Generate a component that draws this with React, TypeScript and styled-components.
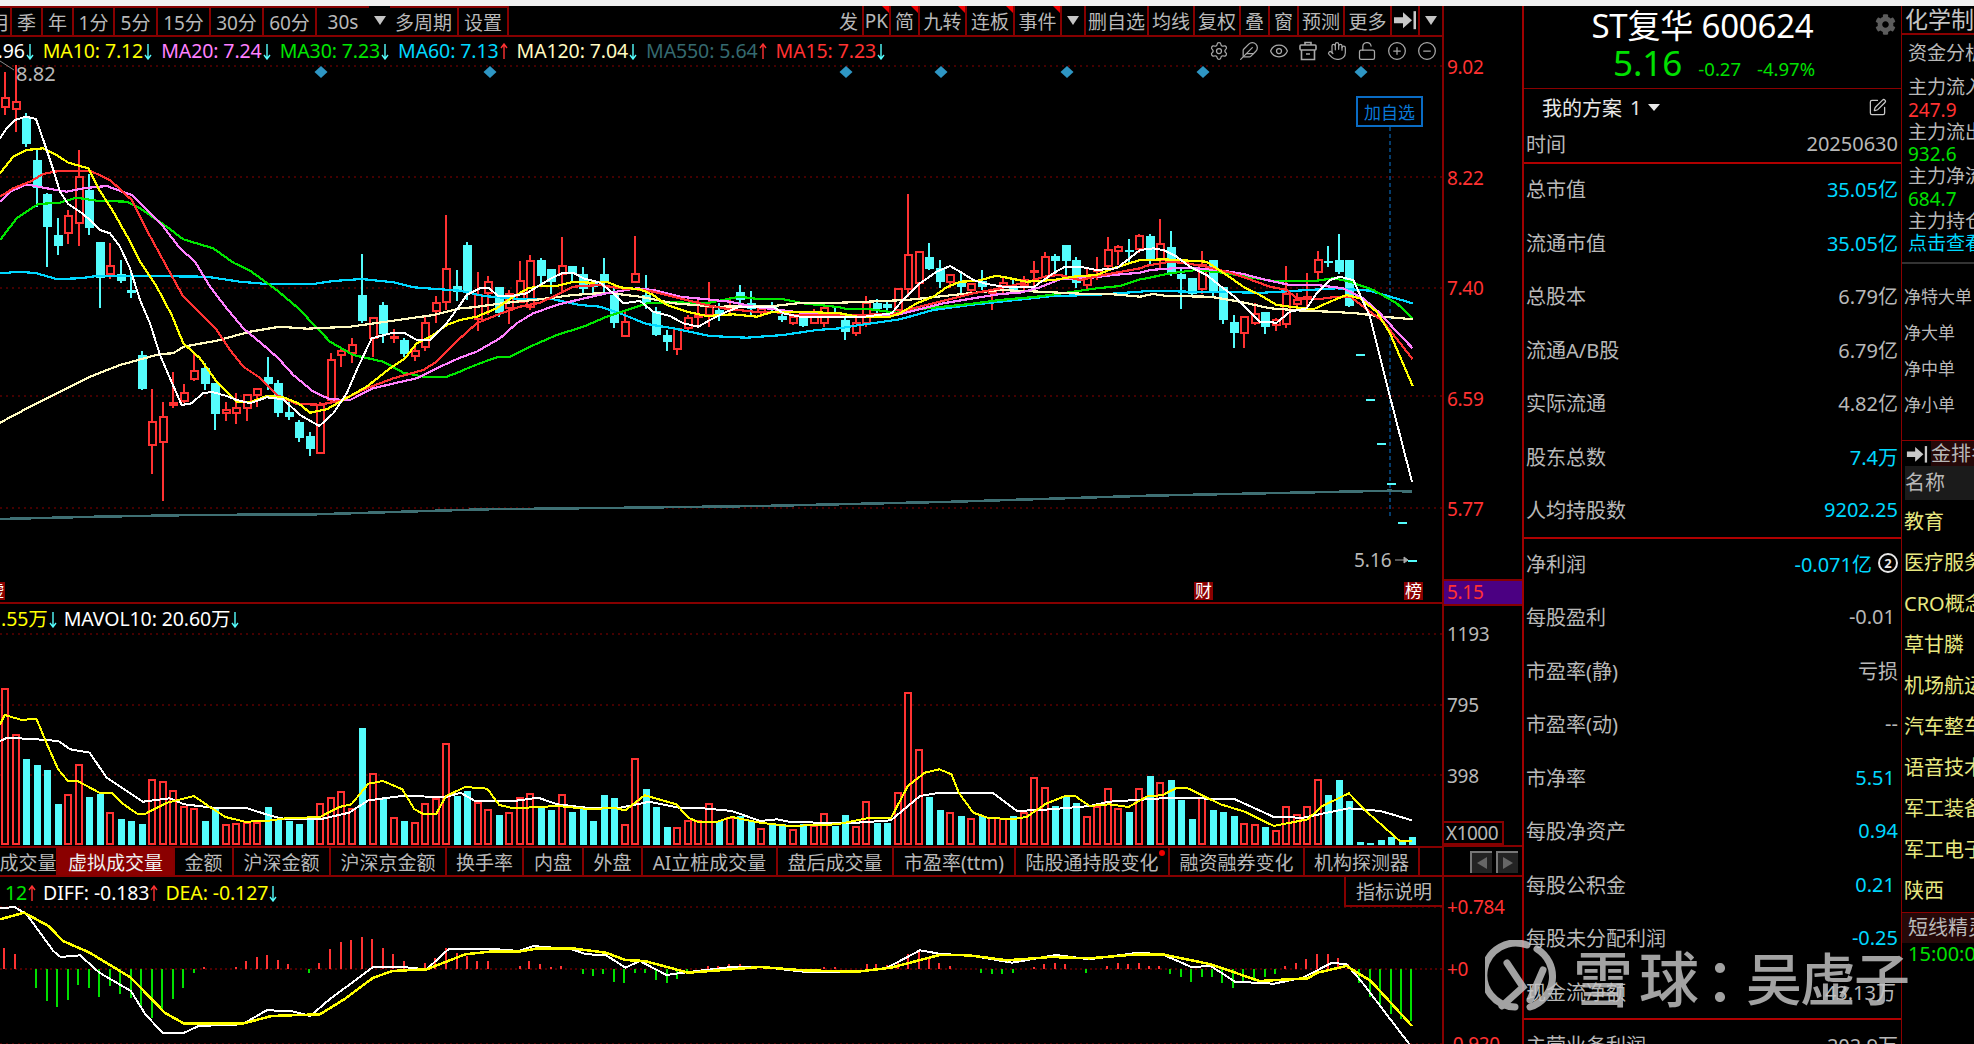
import React from 'react';
import styled, { createGlobalStyle } from 'styled-components';
import { Settings, Feather, Eye, Hand, LockOpen, CirclePlus, CircleMinus, SquarePen } from 'lucide-react';
import { FaCog } from 'react-icons/fa';

const RED = '#ff3232';
const CYAN = '#54fcfc';
const LINE = '#860000';
const GREY = '#b8b8b8';
const SKY = '#00d8ff';
const GREEN = '#00e000';

const Global = createGlobalStyle`
  html, body { margin: 0; padding: 0; background: #000; }
  body { font-family: "Noto Sans", "Noto Sans CJK SC", sans-serif; }
`;

const Page = styled.div`
  position: relative; width: 1974px; height: 1044px; overflow: hidden; background: #000;
  color: ${GREY}; white-space: nowrap; display: flex; flex-direction: column;
`;
const TopStrip = styled.div`height: 6px; background: #f0f0f0; flex: none;`;
const Body = styled.div`display: flex; flex: 1; min-height: 0;`;
const ChartCol = styled.div`width: 1442px; flex: none; display: flex; flex-direction: column;`;

const Toolbar = styled.div`
  height: 29px; flex: none; display: flex; justify-content: space-between; border-bottom: 2px solid ${LINE};
`;
const ToolGroup = styled.div`display: flex; height: 100%;`;
const ToolBtn = styled.div<{ $w: number; $top?: boolean; $none?: boolean; $corner?: boolean }>`
  position: relative; width: ${p => p.$w}px; box-sizing: border-box; flex: none; height: 100%;
  display: flex; align-items: center; justify-content: center; overflow: hidden;
  font-size: 19px; color: ${GREY};
  border-right: ${p => (p.$none ? 'none' : `2px solid ${LINE}`)};
  border-top: ${p => (p.$top ? `2px solid ${LINE}` : 'none')};
  ${p => p.$corner ? `&::after { content: ''; position: absolute; top: 0; right: 0; border-top: 7px solid #f00000; border-left: 7px solid transparent; }` : ''}
`;
const Clipped = styled.div`width: 12px; overflow: hidden; display: flex; justify-content: flex-end; flex: none; box-sizing: border-box; height: 100%; align-items: center; font-size: 19px; border-right: 2px solid ${LINE}; border-top: 2px solid ${LINE};`;
const Tri = styled.div`width: 0; height: 0; border-left: 6px solid transparent; border-right: 6px solid transparent; border-top: 9px solid #c4c4c4;`;

const Pane = styled.div<{ $h: number; $line?: boolean }>`
  position: relative; height: ${p => p.$h}px; flex: none; overflow: hidden;
  border-bottom: ${p => (p.$line ? `2px solid ${LINE}` : 'none')};
`;
const Chart = styled.svg`display: block;`;
const Legend = styled.div<{ $left: number; $top: number; $gap: number }>`
  position: absolute; left: ${p => p.$left}px; top: ${p => p.$top}px; display: flex; gap: ${p => p.$gap}px;
  font-size: 19.5px; line-height: 22px;
`;
const LegendItem = styled.span<{ $c: string }>`color: ${p => p.$c}; display: inline-flex; align-items: center; gap: 1px; letter-spacing: -.1px;`;
const ToolIcons = styled.div`
  position: absolute; right: 5px; top: 4px; display: flex; gap: 10px; align-items: center; color: #a8a8a8;
`;
const AddBtn = styled.div`
  position: absolute; left: 1356px; top: 59px; width: 67px; height: 31px; box-sizing: border-box;
  border: 2px solid #0a6cc4; color: #0a78d8; font-size: 17px; display: flex; align-items: center; justify-content: center;
`;

const Tabs = styled.div`
  height: 31px; flex: none; box-sizing: border-box; display: flex; border-top: 2px solid ${LINE}; border-bottom: 2px solid ${LINE};
`;
const Tab = styled.div<{ $w: number; $on?: boolean; $dot?: boolean }>`
  position: relative; width: ${p => p.$w}px; flex: none; box-sizing: border-box; display: flex; align-items: center; justify-content: center;
  overflow: hidden; font-size: 19px; border-right: 2px solid ${LINE};
  background: ${p => (p.$on ? '#8a0000' : 'transparent')}; color: ${p => (p.$on ? '#f0f0f0' : GREY)};
  ${p => p.$dot ? `&::after { content: ''; position: absolute; top: 2px; right: 3px; width: 6px; height: 6px; border-radius: 50%; background: #f00000; }` : ''}
`;
const HintBtn = styled.div`
  position: absolute; right: 0; top: 0; width: 98px; height: 30px; box-sizing: border-box;
  border-left: 2px solid ${LINE}; border-bottom: 2px solid ${LINE}; font-size: 19px; display: flex; align-items: center; justify-content: center; background: #000;
`;

const AxisCol = styled.div`
  width: 80px; flex: none; box-sizing: border-box; border-left: 2px solid ${LINE}; display: flex; flex-direction: column;
`;
const AxisBlock = styled.div<{ $h: number; $pt: number; $gap: number }>`
  height: ${p => p.$h}px; flex: none; box-sizing: border-box; padding-top: ${p => p.$pt}px; padding-left: 3px;
  display: flex; flex-direction: column; gap: ${p => p.$gap}px;
`;
const AxisLabel = styled.div<{ $c: string; $mt?: number }>`height: 20px; flex: none; line-height: 20px; font-size: 19px; letter-spacing: -.3px; color: ${p => p.$c}; margin-top: ${p => p.$mt || 0}px;`;
const Violet = styled.div`
  height: 27px; flex: none; box-sizing: border-box; background: #4b0082; border-top: 2px solid ${LINE}; border-bottom: 2px solid ${LINE};
  color: ${RED}; font-size: 19px; line-height: 23px; padding-left: 3px; letter-spacing: -.3px;
`;
const XBox = styled.div`
  width: 60px; height: 24px; box-sizing: border-box; flex: none; border: 2px solid ${LINE}; border-left: none; font-size: 19px; line-height: 21px; padding-left: 2px; letter-spacing: -.5px;
`;
const ScrollRow = styled.div`
  height: 32px; flex: none; box-sizing: border-box; display: flex; gap: 4px; padding: 4px 0 2px 28px; margin-left: -2px; width: 80px;
  border-top: 2px solid ${LINE}; border-bottom: 2px solid ${LINE};
`;
const ScrollBtn = styled.div<{ $left?: boolean }>`
  width: 22px; flex: none; background: #232323; border-top: 2px solid #777; border-left: 2px solid #777; box-sizing: border-box;
  display: flex; align-items: center; justify-content: center;
  &::before { content: ''; border-top: 6px solid transparent; border-bottom: 6px solid transparent;
    ${p => (p.$left ? 'border-right: 10px solid #666;' : 'border-left: 10px solid #666;')} }
`;

const Info = styled.div`
  width: 380px; flex: none; box-sizing: border-box; border-left: 2px solid #a00000; border-right: 1px solid #8a0000; display: flex; flex-direction: column;
`;
const Head = styled.div`height: 83px; flex: none; box-sizing: border-box; position: relative; border-bottom: 1px solid #8a0000; display: flex; flex-direction: column; align-items: center;`;
const Title = styled.div`font-size: 33px; line-height: 34px; color: #fff; margin-top: 3px; margin-right: 20px; letter-spacing: -.2px;`;
const PriceRow = styled.div`display: flex; align-items: baseline; gap: 15px; margin-top: -1px; margin-left: 3px; color: ${GREEN};`;
const Price = styled.span`font-size: 35px; line-height: 42px;`;
const Chg = styled.span`font-size: 18.5px; margin-left: 1px;`;
const GearWrap = styled.div`position: absolute; right: 5px; top: 8px; color: #5c5c5c; display: flex;`;
const Plan = styled.div`
  height: 36px; flex: none; display: flex; align-items: center; padding: 0 14px 0 18px; justify-content: space-between; font-size: 20px;
`;
const PlanName = styled.div`display: flex; align-items: center; gap: 8px; color: #e8e8e8;`;
const PlanTri = styled.span`width: 0; height: 0; border-left: 6px solid transparent; border-right: 6px solid transparent; border-top: 7px solid #e8e8e8; margin-left: -1px;`;
const TimeRow = styled.div`
  height: 37px; flex: none; display: flex; align-items: center; justify-content: space-between; padding: 0 3px 0 2px; font-size: 20px;
`;
const Section = styled.div`border-top: 2px solid #b00000; flex: none;`;
const Rows = styled.div`margin-top: -2px;`;
const InfoRow = styled.div`
  height: 53.5px; display: flex; align-items: center; justify-content: space-between; padding: 0 3px 0 2px; font-size: 20px; color: ${GREY};
`;
const Val = styled.span<{ $c?: string; $pr?: number }>`color: ${p => p.$c || GREY}; padding-right: ${p => p.$pr || 0}px; display: inline-flex; align-items: center; gap: 6px;`;
const Ring = styled.span`
  width: 20px; height: 20px; box-sizing: border-box; border: 2px solid #e8e8e8; border-radius: 50%; color: #e8e8e8;
  font-size: 13px; font-weight: 700; line-height: 16px; text-align: center; display: inline-block;
`;

const Far = styled.div`width: 72px; flex: none; display: flex; flex-direction: column; overflow: hidden;`;
const FarHead = styled.div`height: 27px; flex: none; border-bottom: 2px solid #8a0000; font-size: 23px; line-height: 27px; padding-left: 3px; color: #c4c4c4;`;
const Fund = styled.div`height: 229px; flex: none; box-sizing: border-box; padding: 7px 0 0 6px; border-bottom: 2px solid #333; font-size: 19px;`;
const FundLine = styled.div<{ $c?: string; $mb?: number }>`height: 22.3px; line-height: 22.3px; color: ${p => p.$c || GREY}; margin-bottom: ${p => p.$mb || 0}px;`;
const Net = styled.div`height: 177px; flex: none; box-sizing: border-box; padding-top: 15px; border-bottom: 1px solid #8a0000; font-size: 17px;`;
const NetLine = styled.div`height: 36px; line-height: 36px; padding-left: 2px;`;
const RankHead = styled.div`height: 26px; flex: none; display: flex; align-items: center; gap: 3px; padding-left: 4px; font-size: 20px; & > svg { flex: none; }`;
const RankTitle = styled.span`background: #250808; flex: 1; line-height: 26px; height: 26px;`;
const NameHead = styled.div`height: 34px; flex: none; background: #1b1b1b; margin: -1px 0 0 3px; line-height: 34px; font-size: 20px;`;
const RankList = styled.div`flex: none; padding: 1px 0 0 2px;`;
const RankItem = styled.div`height: 41px; line-height: 41px; font-size: 20px; color: #e8e880;`;
const Sprite = styled.div`height: 30px; flex: none; background: #250808; border-top: 1px solid #8a0000; font-size: 20px; line-height: 30px; padding-left: 6px; margin-top: 1px;`;
const SpriteTime = styled.div`color: ${GREEN}; font-size: 20px; line-height: 22px; padding: 0 0 0 6px;`;

const Watermark = styled.div`
  position: absolute; left: 1485px; top: 940px; height: 72px; display: flex; align-items: center; color: #c6c6c6; opacity: .82;
  font-family: "Noto Sans CJK SC", sans-serif; font-size: 60px; font-weight: 500; line-height: 72px;
`;
const WmText = styled.span<{ $ml: number; $ls?: number; $size?: number }>`margin-left: ${p => p.$ml}px; letter-spacing: ${p => p.$ls || 0}px; font-size: ${p => p.$size || 60}px;`;

// ---------- chart data, in crop coordinates ----------
type Seg = [number, number, number, number, number[]];
const Z5 = (p: number[]): Seg => [0, 560, 2.063, 3, p];
const Z6 = (p: number[]): Seg => [760, 560, 2.063, 3, p];
const Z7 = (p: number[]): Seg => [0, 280, 2.063, 3, p];
const Z8 = (p: number[]): Seg => [760, 280, 2.063, 3, p];
const Z9 = (p: number[]): Seg => [0, 60, 3, 3, p];
const Z10 = (p: number[]): Seg => [440, 200, 3, 3, p];
const Z11 = (p: number[]): Seg => [820, 200, 3, 3, p];
const Z12 = (p: number[]): Seg => [1130, 200, 3, 3, p];

const build = (segs: Seg[]): string => {
  const out: string[] = [];
  let last = -1;
  segs.forEach(([ox, oy, sx, sy, p]) => {
    for (let i = 0; i < p.length; i += 2) {
      const x = ox + p[i] / sx;
      const y = oy + p[i + 1] / sy;
      if (x > last) { out.push(`${x.toFixed(1)},${y.toFixed(1)}`); last = x; }
    }
  });
  return out.join(' ');
};

const PRICE_LINES: { c: string; w: number; segs: Seg[] }[] = [
  { c: '#3f7074', w: 2.5, segs: [Z7([0,717,200,710,400,705,650,703,1000,688,1300,683,1568,678]), Z8([0,678,400,665,800,647,1300,632,1345,635])] },
  { c: '#00d8ff', w: 2.2, segs: [
    Z9([0,640,60,635,110,640,170,657,240,655,290,648,420,648,620,650,720,665,800,672,940,672,1000,663,1085,657,1180,667,1240,682,1380,692]),
    Z10([0,268,50,272,130,288,240,297,340,298,420,315,480,320,540,340,620,372,700,385,810,408,920,413,1030,405,1130,390,1200,385]),
    Z11([0,388,100,378,240,358,340,330,450,315,560,303,700,288,820,285,960,275]),
    Z12([0,275,60,272,180,275,400,278,500,272,620,265,720,272,780,290,848,310])] },
  { c: '#00e600', w: 2.2, segs: [
    Z9([0,540,50,475,115,432,180,428,230,413,290,422,380,425,420,445,500,500,550,538,640,565,700,608,750,632,830,690,895,745,990,845,1060,885,1150,905,1210,938,1270,950,1340,950,1380,935]),
    Z10([70,510,120,490,170,472,210,470,270,440,350,405,430,380,500,350,560,330,620,310,700,307,800,310,900,290,960,298,1030,298,1090,310,1200,322]),
    Z11([0,312,40,318,80,327,150,328,230,338,290,328,370,320,450,312,540,300,650,290,760,275,830,265,900,258,960,238]),
    Z12([0,243,50,235,120,220,200,210,280,218,380,235,430,243,560,242,610,235,660,245,730,270,800,310,848,355])] },
  { c: '#fffac0', w: 2.2, segs: [
    Z9([0,1088,100,1035,200,985,270,950,360,915,480,882,520,880,550,860,650,842,750,815,840,800,920,806,1050,800,1180,782,1300,765,1380,745]),
    Z10([0,338,100,322,200,308,300,298,400,285,500,278,600,290,700,310,830,320,1000,318,1090,308,1200,308]),
    Z11([0,308,140,305,260,300,400,285,540,270,660,275,800,282,880,283,960,290]),
    Z12([0,287,70,282,110,288,240,290,330,305,420,325,520,332,600,335,680,340,760,350,848,358])] },
  { c: '#ff80ff', w: 2.2, segs: [
    Z9([0,425,30,395,80,373,140,385,200,395,250,385,320,378,395,405,440,450,490,500,540,565,585,605,630,680,680,745,730,805,790,855,835,895,880,945,940,995,990,1018,1050,1020,1120,985,1190,968,1250,955,1310,925,1380,893]),
    Z10([0,505,50,475,110,455,180,415,230,370,280,340,350,315,420,298,500,280,590,265,640,270,720,290,800,298,870,305,940,320,1020,330,1100,340,1200,345]),
    Z11([0,340,50,345,130,350,230,345,290,330,370,310,460,295,540,282,600,278,660,262,720,238,800,235,880,225,960,218]),
    Z12([0,218,60,210,130,205,200,205,280,212,340,222,400,238,480,255,560,255,640,265,700,295,750,340,800,395,848,445])] },
  { c: '#ff3232', w: 2.2, segs: [
    Z9([0,410,40,385,90,365,130,342,180,332,270,332,330,360,395,420,440,510,500,620,550,710,600,760,650,810,690,870,730,920,775,950,830,1005,890,1032,960,1034,1020,1022,1100,985,1180,955,1270,930,1310,905,1380,835]),
    Z10([0,470,60,410,110,370,170,345,240,320,300,308,350,285,400,260,480,255,540,265,590,268,640,275,700,290,800,315,850,325,940,335,1000,335,1060,345,1200,345]),
    Z11([0,345,50,342,130,345,230,340,280,325,340,310,400,295,460,280,540,265,620,247,680,228,720,225,780,240,850,225,960,205]),
    Z12([0,210,50,197,120,185,170,190,230,200,290,215,350,235,420,260,470,270,500,295,570,297,620,290,660,290,700,320,760,365,848,478])] },
  { c: '#ffff00', w: 2.2, segs: [
    Z9([0,340,40,290,80,270,130,265,170,285,205,308,265,325,295,385,340,455,385,535,420,605,470,680,515,765,550,850,600,895,650,965,710,1025,750,1027,800,1008,850,1012,895,1030,930,1058,980,1048,1020,1025,1100,980,1170,925,1215,895,1250,850,1300,825,1340,795,1380,780]),
    Z10([0,395,40,365,110,350,170,325,220,290,265,265,300,258,350,258,400,245,450,248,500,245,540,262,600,268,640,285,680,315,740,335,800,348,880,343,950,350,1000,335,1080,335,1200,340]),
    Z11([0,340,60,355,120,352,210,350,240,340,290,310,340,290,380,262,420,245,470,243,530,227,570,235,620,245,700,240,760,230,830,225,880,205,960,180]),
    Z12([0,187,50,180,100,178,180,182,230,185,290,225,340,260,390,285,440,315,480,320,550,328,600,305,650,285,690,295,740,335,780,400,848,558])] },
  { c: '#ffffff', w: 2, segs: [
    Z9([0,235,20,205,45,180,78,170,108,177,130,240,160,330,180,395,205,432,240,455,270,480,300,510,330,520,360,560,390,625,420,720,450,790,480,885,510,955,545,1035,575,1030,610,998,640,997,680,1008,710,1020,750,1030,800,1012,850,1018,900,1065,958,1098,1000,1060,1040,1000,1070,930,1115,835,1180,818,1215,820,1250,840,1290,840,1340,790,1380,735]),
    Z10([30,340,80,285,120,265,145,263,175,288,215,288,260,280,300,255,340,232,370,218,400,218,430,235,480,248,520,280,550,310,600,303,640,335,690,348,730,370,775,380,810,360,860,335,900,320,960,320,1000,320,1030,340,1080,350,1120,352,1200,352]),
    Z11([0,352,60,355,120,352,215,340,240,310,300,250,350,215,390,198,420,215,460,240,500,252,560,262,640,262,700,220,735,200,790,202,830,210,890,205,960,150]),
    Z12([0,180,30,155,70,145,100,150,140,170,180,200,230,225,280,265,320,295,350,325,390,365,440,368,480,335,530,325,560,280,600,240,630,230,670,240,720,350,780,590,846,845])] },
];

type K = [0 | 1, number, number, number, number];
const KA: K[] = [
  [1,35,115,140,165],[1,15,125,148,215],[0,160,170,252,260],[0,265,300,385,440],[0,400,403,500,622],[0,475,525,557,585],
  [1,450,467,518,552],[1,270,350,490,557],[0,342,390,503,525],[0,545,545,653,745],[1,550,617,643,657],[0,600,643,663,668],
  [0,635,690,698,713],[0,873,885,988,990],[1,988,1085,1156,1242],[1,1027,1070,1146,1322],[1,937,1030,1034,1043],[1,972,998,1024,1028],
  [1,878,932,958,962],[0,908,925,972,990],[0,968,968,1062,1110],[1,1026,1050,1060,1083],[1,1000,1043,1060,1092],[1,1003,1005,1043,1083],
  [1,985,987,1005,1042],[0,892,952,972,990],[0,960,968,1060,1070],[0,1025,1057,1070,1080],[0,1080,1087,1134,1146],[0,1117,1128,1167,1188],
  [1,1027,1035,1178,1180],[1,880,900,1020,1030],[1,860,872,886,920],[1,835,855,878,908],[0,583,706,783,790],[1,772,773,835,892],
  [0,727,735,822,848],[1,808,830,833,848],[0,835,840,882,892],[1,855,872,888,903],[1,770,788,860,872],[1,708,728,753,790],
  [1,465,627,727,750],[0,630,678,697,722],
];
const KB: K[] = [
  [0,127,135,275,300],[1,217,285,358,392],[1,228,245,278,345],[0,262,262,340,352],[1,270,282,325,372],[1,183,242,305,310],
  [1,165,182,322,330],[0,175,180,228,255],[0,207,207,245,282],[1,110,197,222,272],[0,198,198,218,245],[0,200,222,268,282],
  [0,240,250,260,290],[0,175,222,248,285],[0,262,285,370,385],[1,330,367,407,410],[1,108,223,245,248],[0,225,285,310,327],
  [0,320,332,405,408],[0,390,405,427,453],[1,385,388,447,465],[1,345,353,385,390],[1,300,345,352,380],[1,246,322,345,380],
  [0,310,330,342,362],[1,292,320,325,340],[0,255,277,300,315],[0,273,308,327,348],[1,322,328,335,352],[0,305,315,325,340],
  [0,335,347,360,365],[1,345,350,368,375],[0,340,345,378,380],[1,328,343,368,372],[1,312,325,368,382],[0,323,335,345,352],
  [0,345,360,395,420],[1,350,368,398,408],[1,288,310,368,380],[0,297,308,328,345],[0,300,312,325,345],[1,263,268,330,335],
  [1,-18,165,268,290],[1,153,155,250,300],[0,128,171,207,210],[0,180,205,247,265],[1,222,224,245,265],[0,220,250,260,282],
  [1,250,252,270,285],[0,210,242,260,270],[1,270,272,280,330],[1,232,250,258,285],[0,240,262,272,282],[1,228,240,255,270],
  [1,183,214,217,270],[1,157,170,230,240],[0,162,168,182,225],[0,135,135,183,228],[0,172,180,250,265],[1,205,230,255,270],
  [1,172,210,212,240],[1,112,151,197,210],[1,135,142,153,195],[0,117,150,153,190],[1,102,108,147,160],[0,102,108,180,195],
  [1,57,133,180,207],[0,93,142,220,228],[0,200,222,237,327],[0,233,233,282,290],[1,153,195,268,282],[0,180,180,272,290],
  [0,260,262,360,372],[0,345,367,398,444],[1,350,350,398,444],[1,310,342,370,375],[0,335,335,380,402],[1,355,360,375,393],
  [1,198,282,372,384],[1,280,299,313,318],[1,220,292,295,320],[1,153,180,217,240],[0,138,182,187,200],[0,102,180,215,222],[0,180,180,318,320],
];
const DASHES: [number, number][] = [[1359.5, 354], [1370, 398.5], [1380.5, 442.5], [1391, 482.5], [1401.5, 521.5], [1412, 559.5]];

const barX = (i: number) => Math.round(5 + 10.5 * i);

const Candle: React.FC<{ i: number; k: K; oy: number }> = ({ i, k, oy }) => {
  const [red, wt, bt, bb, wb] = k;
  const x = barX(i);
  const y = (v: number) => oy + v / 3;
  const c = red ? RED : CYAN;
  return (
    <g>
      <line x1={x} x2={x} y1={y(wt)} y2={y(wb)} stroke={c} strokeWidth={2} />
      {red ? (
        <rect x={x - 3} y={y(bt)} width={7} height={Math.max(1, y(bb) - y(bt))} fill="#000" stroke={c} strokeWidth={2} />
      ) : (
        <rect x={x - 4} y={y(bt)} width={9} height={Math.max(2, y(bb) - y(bt))} fill={c} />
      )}
    </g>
  );
};

const VOL: [0 | 1, number][] = ([
  [1,385],[1,523],[0,595],[0,612],[0,628],[0,730],[1,703],[1,613],[0,708],[0,698],[1,755],[0,775],[0,780],[0,790],[1,658],[1,664],[1,690],[1,737],[1,745],[0,780],
  [0,745],[1,793],[1,790],[1,785],[1,785],[0,738],[0,775],[0,780],[0,790],[0,765],[1,728],[1,710],[1,692],[1,745],[0,502],[1,640],[0,715],[1,772],[0,780],[1,785],
  [1,730],[1,715],[1,548],[0,705],[0,690],[1,727],[1,748],[0,762],[1,755],[1,710],[1,700],[0,740],[0,748],[1,703],[0,753],[0,740],[0,780],[0,702],[0,712],[1,793],
  [1,595],[0,685],[0,738],[0,798],[1,802],[1,780],[1,780],[1,730],[0,780],[1,770],[0,765],[0,780],[1,803],[0,785],[0,790],[1,808],[0,790],[1,795],[1,758],[0,795],
  [0,763],[1,798],[1,722],[0,785],[0,785],[1,695],[1,395],[1,568],[0,707],[0,748],[1,755],[0,765],[1,775],[0,765],[1,770],[1,775],[0,765],[1,755],[1,650],[1,682],
  [0,735],[0,708],[0,727],[1,767],[1,737],[1,683],[1,745],[0,753],[1,685],[0,645],[1,667],[0,658],[0,717],[0,775],[1,712],[0,748],[0,753],[0,765],[1,790],[1,793],
  [0,798],[1,810],[1,737],[1,763],[1,738],[1,658],[0,702],[0,658],[0,720],[0,843],[0,846],[0,838],[0,828],[0,842],[0,828],
] as [0 | 1, number][]);
const VOL_BASE = 844;
const vy = (p: number) => 560 + p / 3;

const MACD_A: [number, number][] = [[9,1162],[30,1180],[74,1280],[96,1320],[118,1338],[140,1317],[160,1272],[184,1280],[204,1308],[226,1275],[248,1298],[270,1312],[291,1335],[313,1370],[335,1350],[357,1315],[378,1280],[400,1235],[420,1218],[465,1224],[487,1217],[507,1200],[530,1188],[550,1183],[573,1197],[595,1210],[637,1235],[659,1205],[681,1165],[703,1143],[725,1137],[747,1128],[767,1135],[790,1162],[810,1178],[833,1200],[855,1218],[877,1205],[898,1190],[920,1162],[942,1175],[964,1185],[985,1200],[1007,1200],[1072,1216],[1092,1200],[1115,1210],[1137,1218],[1158,1215],[1202,1240],[1223,1245],[1245,1240],[1267,1262],[1288,1265],[1310,1235],[1330,1235],[1353,1258],[1375,1265],[1397,1255],[1418,1238],[1460,1216],[1482,1216],[1504,1208],[1527,1208],[1548,1216]];
const MACD_B: [number, number][] = [[132,1218],[154,1218],[220,1210],[240,1210],[262,1212],[284,1205],[305,1180],[328,1170],[349,1190],[369,1205],[391,1215],[455,1235],[478,1238],[499,1238],[521,1235],[565,1218],[586,1208],[608,1205],[630,1210],[672,1235],[715,1215],[738,1205],[759,1210],[781,1205],[802,1215],[824,1215],[846,1240],[868,1248],[889,1262],[911,1248],[933,1248],[954,1265],[976,1280],[997,1260],[1019,1260],[1041,1248],[1062,1240],[1084,1215],[1106,1205],[1127,1195],[1149,1180],[1171,1180],[1192,1190],[1214,1210],[1236,1265],[1258,1308],[1279,1335],[1301,1360],[1322,1375],[1344,1380]];

const ArrowMark: React.FC<{ up?: boolean }> = ({ up }) => (
  <svg width="8" height="17" viewBox="0 0 8 17" fill="none" stroke={up ? RED : CYAN} strokeWidth="1.4">
    {up ? <path d="M4 16V1M1 5l3-4 3 4" /> : <path d="M4 1v15M1 12l3 4 3-4" />}
  </svg>
);

const JumpIcon: React.FC<{ size?: number }> = ({ size = 24 }) => (
  <svg width={size} height={size * 0.85} viewBox="0 0 24 20">
    <path d="M1 7h9V2l9 8-9 8v-5H1z" fill="#c8c8c8" />
    <rect x="20.5" y="1" width="2.5" height="18" fill="#c8c8c8" />
  </svg>
);

const BasketIcon = () => (
  <svg width="18" height="20" viewBox="0 0 18 20" fill="none" stroke="#a8a8a8" strokeWidth="1.6">
    <path d="M6 4V1.5h6V4" /><rect x="1" y="4" width="16" height="5" rx="1" /><path d="M2.5 9v9.5h13V9M7 13h4" />
  </svg>
);

const Grid: React.FC<{ ys: number[] }> = ({ ys }) => (
  <g stroke="#8a0000" strokeDasharray="2 4" strokeWidth="1">
    {ys.map(y => <line key={y} x1="0" x2="1442" y1={y} y2={y} />)}
  </g>
);

const DIAMONDS = [321, 490, 846, 941, 1067, 1203, 1361];

const PriceChart = () => (
  <Chart width="1442" height="563" viewBox="0 37 1442 563">
    <Grid ys={[66, 177, 288, 396, 508]} />
    {DIAMONDS.map(x => <path key={x} d={`M${x} 66l6.5 6-6.5 6-6.5-6z`} fill="#2e96c4" />)}
    <line x1="1390" x2="1390" y1="127" y2="516" stroke="#0a78d8" strokeDasharray="4 3" />
    <g shapeRendering="crispEdges">
      {KA.map((k, i) => <Candle key={i} i={i} k={k} oy={60} />)}
      {KB.map((k, i) => <Candle key={i} i={i + 44} k={k} oy={200} />)}
      {DASHES.map(([x, y]) => <rect key={x} x={x - 4} y={y} width={9} height={2} fill={CYAN} />)}
      {PRICE_LINES.map(l => <polyline key={l.c} points={build(l.segs)} fill="none" stroke={l.c} strokeWidth={l.w} />)}
    </g>
    <line x1="0" y1="61" x2="14" y2="70" stroke="#888" />
    <text x="16" y="81" fontSize="20" fill="#b8b8b8">8.82</text>
    <text x="1354" y="567" fontSize="19" fill="#b8b8b8">5.16</text>
    <path d="M1395 560h13M1404 557l4 3-4 3z" stroke="#a8a8a8" fill="#a8a8a8" />
    <g fontSize="17" fill="#fff" textAnchor="middle">
      <rect x="-14" y="582" width="19" height="19" fill="#8a0000" /><text x="-4" y="597">虚</text>
      <rect x="1194" y="582" width="19" height="19" fill="#8a0000" /><text x="1203.5" y="597">财</text>
      <rect x="1404" y="582" width="19" height="19" fill="#8a0000" /><text x="1413.5" y="597">榜</text>
    </g>
  </Chart>
);

const VolChart = () => (
  <Chart width="1442" height="242" viewBox="0 603 1442 242">
    <Grid ys={[633, 704, 774]} />
    <g shapeRendering="crispEdges">
      {VOL.map(([red, p], i) => {
        const x = barX(i);
        const top = vy(p);
        return red ? (
          <rect key={i} x={x - 3} y={top} width={6} height={VOL_BASE - top - 1} fill="#000" stroke={RED} strokeWidth={2} />
        ) : (
          <rect key={i} x={x - 3.5} y={top} width={7.5} height={Math.max(1, VOL_BASE - top)} fill={CYAN} />
        );
      })}
      <polyline fill="none" stroke="#fff" strokeWidth={2} points={build([
        Z5([0,540,15,530,75,535,120,540,145,565,185,575,220,650,295,722,350,712,380,730,440,740,510,742,560,765,590,775,660,775,720,755,760,718,830,705,920,708,950,695,980,720,1060,720,1110,710,1150,730,1210,740,1280,740,1340,722,1400,740,1450,742,1510,750,1568,780]),
        Z6([0,780,35,775,60,782,120,785,200,785,270,778,330,705,370,695,480,695,530,750,600,745,680,735,720,722,850,710,980,715,1060,768,1120,770,1215,742,1280,750,1345,778]),
      ])} />
      <polyline fill="none" stroke="#ffff00" strokeWidth={2} points={build([
        Z5([0,490,10,462,45,477,75,473,100,560,120,625,140,660,160,660,205,695,230,695,255,730,285,760,300,758,345,725,400,705,430,735,465,768,505,782,550,780,590,772,660,768,700,738,725,730,760,668,790,660,830,685,855,745,875,760,900,758,920,705,960,678,1005,683,1030,732,1060,742,1150,735,1220,745,1265,740,1290,748,1330,703,1395,730,1420,770,1440,783,1480,782,1510,768,1568,785]),
        Z6([0,787,60,795,160,790,220,772,270,772,305,675,340,635,370,625,395,640,410,695,440,755,470,770,520,775,550,768,590,728,630,705,650,705,680,735,720,730,760,738,800,705,830,703,860,680,880,680,950,730,1000,752,1060,795,1130,775,1160,735,1215,697,1250,750,1320,840,1345,840]),
      ])} />
    </g>
  </Chart>
);

const MacdChart = () => (
  <Chart width="1442" height="168" viewBox="0 876 1442 168">
    <Grid ys={[906, 1043]} />
    <line x1="0" x2="1442" y1="968" y2="968" stroke="#a00000" strokeDasharray="2 3" />
    <g shapeRendering="crispEdges" strokeWidth={2}>
      {MACD_A.map(([px, p]) => (
        <line key={px} x1={px / 2.063} x2={px / 2.063} y1="968" y2={vy(p)} stroke={p < 1225 ? RED : '#00e000'} />
      ))}
      {MACD_B.map(([px, p]) => (
        <line key={px} x1={760 + px / 2.063} x2={760 + px / 2.063} y1="968" y2={vy(p)} stroke={p < 1225 ? RED : '#00e000'} />
      ))}
      <polyline fill="none" stroke="#fff" strokeWidth={2} points={build([
        Z5([0,1042,30,1038,55,1060,80,1110,110,1170,125,1188,165,1183,205,1235,270,1290,300,1360,335,1415,380,1415,410,1395,500,1390,550,1348,600,1350,640,1365,680,1315,770,1218,830,1218,880,1225,925,1165,1010,1163,1070,1170,1100,1155,1180,1165,1210,1180,1250,1182,1290,1220,1320,1200,1375,1242,1420,1233,1510,1218,1568,1217]),
        Z6([0,1217,90,1232,200,1232,260,1222,330,1168,370,1178,440,1185,520,1205,610,1182,680,1195,780,1175,830,1180,890,1218,930,1215,980,1262,1060,1268,1120,1250,1180,1205,1210,1210,1240,1260,1340,1450]),
      ])} />
      <polyline fill="none" stroke="#ffff00" strokeWidth={2.5} points={build([
        Z5([0,1075,50,1055,100,1095,130,1140,185,1175,270,1250,340,1355,380,1388,500,1388,560,1365,660,1360,710,1315,770,1250,810,1230,880,1225,960,1180,1010,1172,1070,1172,1110,1162,1180,1162,1250,1175,1290,1197,1330,1200,1420,1235,1510,1225,1568,1218]),
        Z6([0,1218,90,1228,200,1232,270,1220,370,1182,430,1183,510,1198,600,1188,680,1192,780,1180,830,1180,930,1210,1030,1260,1130,1252,1150,1235,1210,1215,1260,1260,1345,1395]),
      ])} />
    </g>
  </Chart>
);

const MainLegend: { t: string; c: string; up?: boolean }[] = [
  { t: '.96', c: '#fff' }, { t: 'MA10: 7.12', c: '#ffff00' }, { t: 'MA20: 7.24', c: '#ff80ff' }, { t: 'MA30: 7.23', c: '#00e600' },
  { t: 'MA60: 7.13', c: '#00d8ff', up: true }, { t: 'MA120: 7.04', c: '#fffac0' }, { t: 'MA550: 5.64', c: '#356a70', up: true }, { t: 'MA15: 7.23', c: RED },
];

const LEFT_TOOLS: [string, number][] = [['季', 31], ['年', 31], ['1分', 41], ['5分', 43], ['15分', 53], ['30分', 53], ['60分', 53]];
const RIGHT_TOOLS: [string, number, boolean][] = [['发', 29, false], ['PK', 27, true], ['简', 29, true], ['九转', 47, true], ['连板', 48, true], ['事件', 47, true]];
const RIGHT_TOOLS2: [string, number][] = [['删自选', 63], ['均线', 46], ['复权', 46], ['叠', 29], ['窗', 29], ['预测', 46], ['更多', 47]];

const TABS: [string, number, boolean?, boolean?][] = [
  ['成交量', 58], ['虚拟成交量', 117, true], ['金额', 59], ['沪深金额', 97], ['沪深京金额', 116], ['换手率', 77], ['内盘', 60], ['外盘', 59],
  ['AI立桩成交量', 135], ['盘后成交量', 116], ['市盈率(ttm)', 122], ['陆股通持股变化', 154, false, true], ['融资融券变化', 135], ['机构探测器', 115],
];

const FIRST: [string, string, string?][] = [
  ['总市值', '35.05亿', SKY], ['流通市值', '35.05亿', SKY], ['总股本', '6.79亿'], ['流通A/B股', '6.79亿'],
  ['实际流通', '4.82亿'], ['股东总数', '7.4万', SKY], ['人均持股数', '9202.25', SKY],
];
const SECOND: [string, string, string?, number?][] = [
  ['每股盈利', '-0.01', undefined, 3], ['市盈率(静)', '亏损'], ['市盈率(动)', '--'], ['市净率', '5.51', SKY, 3], ['每股净资产', '0.94', SKY],
  ['每股公积金', '0.21', SKY, 3], ['每股未分配利润', '-0.25', SKY], ['现金流净额', '43.13万', undefined, 2],
];
const RANKS = ['教育', '医疗服务', 'CRO概念', '草甘膦', '机场航运', '汽车整车', '语音技术', '军工装备', '军工电子', '陕西'];

export default function App() {
  return (
    <Page>
      <Global />
      <TopStrip />
      <Body>
        <ChartCol>
          <Toolbar>
            <ToolGroup>
              <Clipped>月</Clipped>
              {LEFT_TOOLS.map(([t, w]) => <ToolBtn key={t} $w={w} $top>{t}</ToolBtn>)}
              <ToolBtn $w={52} $top $none>30s</ToolBtn>
              <ToolBtn $w={21} $none><Tri /></ToolBtn>
              <ToolBtn $w={69} $top>多周期</ToolBtn>
              <ToolBtn $w={50} $top>设置</ToolBtn>
            </ToolGroup>
            <ToolGroup>
              {RIGHT_TOOLS.map(([t, w, c]) => <ToolBtn key={t} $w={w} $corner={c}>{t}</ToolBtn>)}
              <ToolBtn $w={24}><Tri /></ToolBtn>
              {RIGHT_TOOLS2.map(([t, w]) => <ToolBtn key={t} $w={w}>{t}</ToolBtn>)}
              <ToolBtn $w={28}><JumpIcon /></ToolBtn>
              <ToolBtn $w={22} $none><Tri /></ToolBtn>
            </ToolGroup>
          </Toolbar>
          <Pane $h={565} $line>
            <PriceChart />
            <Legend $left={-2.5} $top={3} $gap={9}>
              {MainLegend.map(m => (
                <LegendItem key={m.t} $c={m.c}>{m.t}<ArrowMark up={m.up} /></LegendItem>
              ))}
            </Legend>
            <ToolIcons>
              <Settings size={20} strokeWidth={1.5} />
              <Feather size={20} strokeWidth={1.5} />
              <Eye size={20} strokeWidth={1.5} />
              <BasketIcon />
              <Hand size={20} strokeWidth={1.5} />
              <LockOpen size={20} strokeWidth={1.5} />
              <CirclePlus size={20} strokeWidth={1.5} />
              <CircleMinus size={20} strokeWidth={1.5} />
            </ToolIcons>
            <AddBtn>加自选</AddBtn>
          </Pane>
          <Pane $h={242}>
            <VolChart />
            <Legend $left={-10} $top={4} $gap={7}>
              <LegendItem $c="#ffff00">1.55万<ArrowMark /></LegendItem>
              <LegendItem $c="#fff">MAVOL10: 20.60万<ArrowMark /></LegendItem>
            </Legend>
          </Pane>
          <Tabs>
            {TABS.map(([t, w, on, dot]) => <Tab key={t} $w={w} $on={on} $dot={dot}>{t}</Tab>)}
          </Tabs>
          <Pane $h={169}>
            <MacdChart />
            <Legend $left={5} $top={5} $gap={7}>
              <LegendItem $c="#00e600">12<ArrowMark up /></LegendItem>
              <LegendItem $c="#fff">DIFF: -0.183<ArrowMark up /></LegendItem>
              <LegendItem $c="#ffff00">DEA: -0.127<ArrowMark /></LegendItem>
            </Legend>
            <HintBtn>指标说明</HintBtn>
          </Pane>
        </ChartCol>

        <AxisCol>
          <AxisBlock $h={573} $pt={51} $gap={90.5}>
            {['9.02', '8.22', '7.40', '6.59', '5.77'].map(t => <AxisLabel key={t} $c={RED}>{t}</AxisLabel>)}
          </AxisBlock>
          <Violet>5.15</Violet>
          <AxisBlock $h={215} $pt={18} $gap={51}>
            {['1193', '795', '398'].map(t => <AxisLabel key={t} $c={GREY}>{t}</AxisLabel>)}
          </AxisBlock>
          <XBox>X1000</XBox>
          <ScrollRow><ScrollBtn $left /><ScrollBtn /></ScrollRow>
          <AxisBlock $h={167} $pt={20} $gap={42}>
            <AxisLabel $c={RED}>+0.784</AxisLabel>
            <AxisLabel $c={RED}>+0</AxisLabel>
            <AxisLabel $c={RED} $mt={13}>-0.920</AxisLabel>
          </AxisBlock>
        </AxisCol>

        <Info>
          <Head>
            <Title>ST复华 600624</Title>
            <PriceRow>
              <Price>5.16</Price>
              <Chg>-0.27</Chg>
              <Chg>-4.97%</Chg>
            </PriceRow>
            <GearWrap><FaCog size={21} /></GearWrap>
          </Head>
          <Plan>
            <PlanName>我的方案 <span>1</span><PlanTri /></PlanName>
            <SquarePen size={19} color="#c8c8c8" strokeWidth={1.6} />
          </Plan>
          <TimeRow><span>时间</span><span>20250630</span></TimeRow>
          <Section>
            <Rows>
              {FIRST.map(([a, b, c]) => <InfoRow key={a}><span>{a}</span><Val $c={c}>{b}</Val></InfoRow>)}
            </Rows>
          </Section>
          <Section>
            <Rows>
              <InfoRow><span>净利润</span><Val $c={SKY}>-0.071亿<Ring>2</Ring></Val></InfoRow>
              {SECOND.map(([a, b, c, pr]) => <InfoRow key={a}><span>{a}</span><Val $c={c} $pr={pr}>{b}</Val></InfoRow>)}
            </Rows>
          </Section>
          <Section>
            <Rows><InfoRow><span>主营业务利润</span><Val>202.9万</Val></InfoRow></Rows>
          </Section>
        </Info>

        <Far>
          <FarHead>化学制药</FarHead>
          <Fund>
            <FundLine $mb={12}>资金分析</FundLine>
            <FundLine>主力流入</FundLine>
            <FundLine $c={RED}>247.9</FundLine>
            <FundLine>主力流出</FundLine>
            <FundLine $c={GREEN}>932.6</FundLine>
            <FundLine>主力净流</FundLine>
            <FundLine $c={GREEN}>684.7</FundLine>
            <FundLine>主力持仓</FundLine>
            <FundLine $c={SKY}>点击查看</FundLine>
          </Fund>
          <Net>
            <NetLine>净特大单</NetLine>
            <NetLine>净大单</NetLine>
            <NetLine>净中单</NetLine>
            <NetLine>净小单</NetLine>
          </Net>
          <RankHead><JumpIcon size={22} /><RankTitle>金排名</RankTitle></RankHead>
          <NameHead>名称</NameHead>
          <RankList>
            {RANKS.map(r => <RankItem key={r}>{r}</RankItem>)}
          </RankList>
          <Sprite>短线精灵</Sprite>
          <SpriteTime>15:00:00</SpriteTime>
        </Far>
      </Body>
      <Watermark>
        <svg width="72" height="72" viewBox="0 0 72 72" fill="none" stroke="currentColor" strokeWidth="7" strokeLinecap="round">
          <path d="M42 5A32 32 0 1 0 30 67" />
          <path d="M52 9A32 32 0 0 1 45 67" />
          <path d="M22 23L38 47L17 66" />
          <path d="M45 60L58 30" />
        </svg>
        <WmText $ml={16} $ls={6}>雪球</WmText>
        <WmText $ml={0}>：</WmText>
        <WmText $ml={-19} $size={56} $ls={-2}>吴虚子</WmText>
      </Watermark>
    </Page>
  );
}
